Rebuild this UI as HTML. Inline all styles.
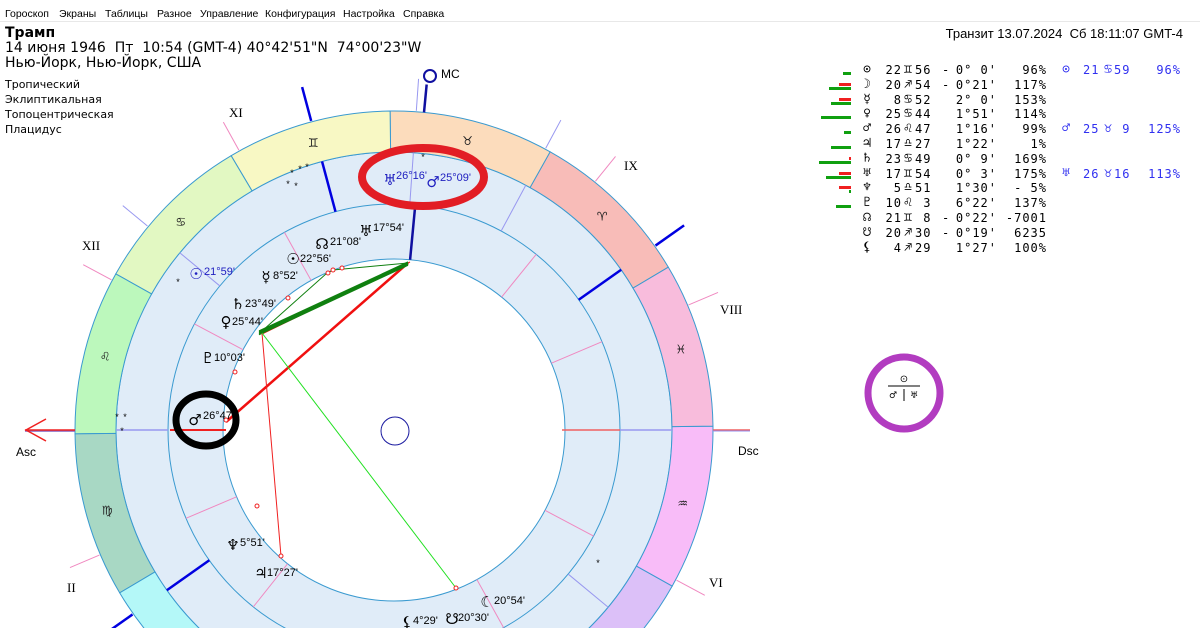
<!DOCTYPE html>
<html style="overflow:hidden"><head><meta charset="utf-8">
<style>
html,body{margin:0;width:1200px;height:628px;overflow:hidden}
body{background:#fff;font-family:"Liberation Sans","DejaVu Sans",sans-serif;position:relative;color:#000}
.a{position:absolute;white-space:nowrap}
.menu{top:8px;font-size:10.5px;font-family:"Liberation Sans",sans-serif}
.t{position:absolute;font-family:"DejaVu Sans Mono","Liberation Mono",monospace;font-size:12px;white-space:nowrap}
svg{position:absolute;left:0;top:0}
</style></head><body>
<div class="a menu" style="left:5px">Гороскоп</div>
<div class="a menu" style="left:59px">Экраны</div>
<div class="a menu" style="left:105px">Таблицы</div>
<div class="a menu" style="left:157px">Разное</div>
<div class="a menu" style="left:200px">Управление</div>
<div class="a menu" style="left:265px">Конфигурация</div>
<div class="a menu" style="left:343px">Настройка</div>
<div class="a menu" style="left:403px">Справка</div>
<div class="a" style="left:0;top:21px;width:1200px;border-top:1px solid #e8e8e8"></div>
<div class="a" style="left:5px;top:25px;font-size:14px;font-weight:bold;font-family:'DejaVu Sans',sans-serif">Трамп</div>
<div class="a" style="left:5px;top:40px;font-size:14px;font-family:'DejaVu Sans',sans-serif">14 июня 1946&nbsp; Пт&nbsp; 10:54 (GMT-4) 40°42'51"N&nbsp; 74°00'23"W</div>
<div class="a" style="left:5px;top:55px;font-size:14px;font-family:'DejaVu Sans',sans-serif">Нью-Йорк, Нью-Йорк, США</div>
<div class="a" style="left:5px;top:77px;font-size:11px;font-family:'DejaVu Sans',sans-serif;line-height:15px">Тропический<br>Эклиптикальная<br>Топоцентрическая<br>Плацидус</div>
<div class="a" style="right:17px;top:26px;font-size:13px;font-family:'Liberation Sans',sans-serif">Транзит 13.07.2024&nbsp; Сб 18:11:07 GMT-4</div>

<svg id="s" width="1200" height="628" viewBox="0 0 1200 628"></svg>
<div id="tbl"></div>

<script>
const cx=394,cy=430;
const S=document.getElementById('s');
const ns='http://www.w3.org/2000/svg';
function P(a,r){const t=a*Math.PI/180;return [cx-r*Math.cos(t),cy+r*Math.sin(t)];}
function el(n,at,txt){const e=document.createElementNS(ns,n);for(const k in at)e.setAttribute(k,at[k]);if(txt!==undefined)e.textContent=txt;S.appendChild(e);return e;}
function sector(a1,a2,r1,r2,fill){const p1=P(a1,r2),p2=P(a2,r2),p3=P(a2,r1),p4=P(a1,r1);
 const large=Math.abs(a2-a1)>180?1:0;
 el('path',{d:`M${p1} A${r2} ${r2} 0 ${large} 0 ${p2} L${p3} A${r1} ${r1} 0 ${large} 1 ${p4}Z`,fill:fill,stroke:'#3a9ad0','stroke-width':1});}
function line(a,r1,r2,c,w){const p=P(a,r1),q=P(a,r2);el('line',{x1:p[0],y1:p[1],x2:q[0],y2:q[1],stroke:c,'stroke-width':w});}
el('circle',{cx,cy,r:278,fill:'#e0ecf8',stroke:'#3a9ad0','stroke-width':1});
el('circle',{cx,cy,r:226,fill:'#e0ecf8',stroke:'#3a9ad0','stroke-width':1});
el('circle',{cx,cy,r:171,fill:'#fff',stroke:'#3a9ad0','stroke-width':1});
const cols=['#f8bcb8','#fcdcbc','#f8f8c4','#e2f8c2','#bcf8bc','#a8d8c4','#b4f8f8','#bcdcf8','#c8c8f8','#dcc0f8','#f8bcf8','#f8bcdc'];
const gl=['♈','♉','♊','♋','♌','♍','♎','♏','♐','♑','♒','♓'];
const asc=149.3;
for(let i=0;i<12;i++){let a1=30*i-asc;a1=((a1%360)+360)%360;const a2=a1+30;
 sector(a1,a2,278,319,cols[i]);
 const g=P(a1+15,298);el('text',{x:g[0],y:g[1]+4,'font-size':12,'text-anchor':'middle','font-family':'DejaVu Sans',fill:'#222'},gl[i]);}
[23,51.5,119,152,203,231,299,332].forEach(a=>{line(a,171,226,'#f088c0',1);line(a,320,352,'#f088c0',1);});
[241.7,266,320.4,140.4].forEach(a=>{line(a,226,278,'#9898f0',1);line(a,320,352,'#9898f0',1);});
line(0,226,278,'#9898f0',1.5);line(180,226,278,'#9898f0',1.5);
[285,215.2,35.2].forEach(a=>{line(a,226,278,'#0000e0',2.5);line(a,320,355,'#0000e0',2.5);});
line(264.6,171,226,'#1010a0',2.5);line(264.6,319,347,'#1010a0',2.5);
el('circle',{cx:430,cy:76,r:6,fill:'#fff',stroke:'#1010a0','stroke-width':2});
el('text',{x:441,y:78,'font-size':12},'MC');
el('line',{x1:170,y1:430,x2:226,y2:430,stroke:'#f02020','stroke-width':2});
el('line',{x1:562,y1:430,x2:620,y2:430,stroke:'#f06060','stroke-width':1.5});
el('line',{x1:25,y1:431,x2:75,y2:431,stroke:'#8060c0','stroke-width':1.5});
el('line',{x1:25,y1:430,x2:75,y2:430,stroke:'#f02020','stroke-width':1.5});
el('polyline',{points:'46,419 26,430 46,441',fill:'none',stroke:'#f02020','stroke-width':1.5});
el('line',{x1:713,y1:430,x2:750,y2:430,stroke:'#f06060','stroke-width':1.5});
el('line',{x1:713,y1:431,x2:750,y2:431,stroke:'#9090f0','stroke-width':1});
el('text',{x:16,y:456,'font-size':12},'Asc');
el('text',{x:738,y:455,'font-size':12},'Dsc');
[['XI',237,117],['XII',90,250],['II',75,592],['IX',632,170],['VIII',728,314],['VI',717,587]].forEach(r=>el('text',{x:r[1]-8,y:r[2],'font-size':13,'font-family':'Liberation Serif'},r[0]));
el('line',{x1:408,y1:263,x2:226,y2:422,stroke:'#f01010','stroke-width':2.5});
el('line',{x1:410,y1:262,x2:262,y2:334,stroke:'#f01010','stroke-width':1});
for(let i=0;i<5;i++)el('line',{x1:408,y1:262+i*0.8,x2:259,y2:331+i*0.9,stroke:'#108010','stroke-width':1.3});
el('polyline',{points:'408,263 333,270 327,273 262,331',fill:'none',stroke:'#108010','stroke-width':1});
el('line',{x1:262,y1:333,x2:281,y2:556,stroke:'#f02020','stroke-width':1});
el('line',{x1:262,y1:333,x2:456,y2:588,stroke:'#20e020','stroke-width':1});
[[333,270],[328,273],[342,268],[288,298],[235,372],[226,420],[257,506],[281,556],[456,588]].forEach(p=>el('circle',{cx:p[0],cy:p[1],r:2,fill:'#fff',stroke:'#f02020','stroke-width':1}));
el('circle',{cx:395,cy:431,r:14,fill:'none',stroke:'#1a1aa0','stroke-width':1});
const N=[['♅',366,236,'17°54\'',373,231],['☊',322,249,'21°08\'',330,245],['☉',293,264,'22°56\'',300,262],['☿',266,282,'8°52\'',273,279],['♄',238,309,'23°49\'',245,307],['♀',226,327,'25°44\'',232,325],['♇',208,363,'10°03\'',214,361],['♂',195,425,'26°47\'',203,419],['♆',233,550,'5°51\'',240,546],['♃',261,578,'17°27\'',267,576],['☾',487,607,'20°54\'',494,604],['☋',452,624,'20°30\'',458,621],['⚸',407,627,'4°29\'',413,624]];
N.forEach(n=>{el('text',{x:n[1],y:n[2],'font-size':15,'text-anchor':'middle','font-family':'DejaVu Sans'},n[0]);el('text',{x:n[4],y:n[5],'font-size':11},n[3]);});
const T=[['♅',390,185,'26°16\'',396,179],['♂',433,187,'25°09\'',440,181],['☉',196,279,'21°59\'',204,275]];
T.forEach(n=>{el('text',{x:n[1],y:n[2],'font-size':15,'text-anchor':'middle','font-family':'DejaVu Sans',fill:'#2020c0'},n[0]);el('text',{x:n[4],y:n[5],'font-size':11,fill:'#2020c0'},n[3]);});
[[292,172],[300,168],[307,166],[288,183],[296,185],[178,281],[117,416],[125,416],[122,430],[423,156],[598,562]].forEach(p=>el('text',{x:p[0],y:p[1]+4,'font-size':9,'text-anchor':'middle'},'*'));
el('ellipse',{cx:206,cy:420,rx:30,ry:26,fill:'none',stroke:'#000','stroke-width':7});
el('ellipse',{cx:423,cy:177,rx:61,ry:29,fill:'none',stroke:'#e21d24','stroke-width':8});
el('circle',{cx:904,cy:393,r:36,fill:'none',stroke:'#b23cc0','stroke-width':7});
el('text',{x:904,y:382,'font-size':10,'text-anchor':'middle','font-family':'DejaVu Sans'},'⊙');
el('line',{x1:888,y1:386,x2:920,y2:386,stroke:'#000','stroke-width':1});
el('line',{x1:904,y1:389,x2:904,y2:401,stroke:'#000','stroke-width':1});
el('text',{x:893,y:398,'font-size':9,'text-anchor':'middle','font-family':'DejaVu Sans'},'♂');
el('text',{x:914,y:398,'font-size':9,'text-anchor':'middle','font-family':'DejaVu Sans'},'♅');
const rows=[['⊙','22','♊','56','-','0° 0\'','96%',8,0],['☽','20','♐','54','-','0°21\'','117%',22,12],['☿','8','♋','52','','2° 0\'','153%',20,12],['♀','25','♋','44','','1°51\'','114%',30,0],['♂','26','♌','47','','1°16\'','99%',7,0],['♃','17','♎','27','','1°22\'','1%',20,0],['♄','23','♋','49','','0° 9\'','169%',32,2],['♅','17','♊','54','','0° 3\'','175%',25,12],['♆','5','♎','51','','1°30\'','- 5%',2,12],['♇','10','♌','3','','6°22\'','137%',15,0],['☊','21','♊','8','-','0°22\'','-7001',0,0],['☋','20','♐','30','-','0°19\'','6235',0,0],['⚸','4','♐','29','','1°27\'','100%',0,0]];
let h='';
rows.forEach((r,i)=>{const y=63+i*14.8;
 h+=`<div class="t" style="left:859px;top:${y-1}px;width:16px;text-align:center;font-size:13px">${r[0]}</div>`;
 h+=`<div class="t" style="left:870px;top:${y}px;width:32px;text-align:right;letter-spacing:1px">${r[1]}</div>`;
 h+=`<div class="t" style="left:901px;top:${y-1}px;width:14px;text-align:center;font-size:13px">${r[2]}</div>`;
 h+=`<div class="t" style="left:915px;top:${y}px;letter-spacing:1px">${r[3].length==1?'&nbsp;'+r[3]:r[3]}</div>`;
 h+=`<div class="t" style="left:942px;top:${y}px">${r[4]}</div>`;
 h+=`<div class="t" style="left:940px;top:${y}px;width:57px;text-align:right;white-space:pre;letter-spacing:1px">${r[5]}</div>`;
 h+=`<div class="t" style="left:990px;top:${y}px;width:57px;text-align:right;white-space:pre;letter-spacing:1px">${r[6]}</div>`;
 if(r[7])h+=`<div class="a" style="left:${851-r[7]}px;top:${y+9}px;width:${r[7]}px;height:3px;background:#10a010"></div>`;
 if(r[8])h+=`<div class="a" style="left:${851-r[8]}px;top:${y+5}px;width:${r[8]}px;height:3px;background:#f02020"></div>`;
});
const tr=[[0,'⊙','21','♋','59','96%'],[4,'♂','25','♉',' 9','125%'],[7,'♅','26','♉','16','113%']];
tr.forEach(r=>{const y=63+r[0]*14.8;
 h+=`<div class="t" style="left:1058px;top:${y-1}px;width:16px;text-align:center;color:#3030f0;font-size:13px">${r[1]}</div>`;
 h+=`<div class="t" style="left:1083px;top:${y}px;color:#3030f0;letter-spacing:1px">${r[2]}</div>`;
 h+=`<div class="t" style="left:1101px;top:${y-1}px;width:14px;text-align:center;color:#3030f0;font-size:13px">${r[3]}</div>`;
 h+=`<div class="t" style="left:1114px;top:${y}px;color:#3030f0;white-space:pre;letter-spacing:1px">${r[4]}</div>`;
 h+=`<div class="t" style="left:1130px;top:${y}px;width:51px;text-align:right;color:#3030f0;letter-spacing:1px">${r[5]}</div>`;
});
document.getElementById('tbl').innerHTML=h;
</script>
</body></html>
